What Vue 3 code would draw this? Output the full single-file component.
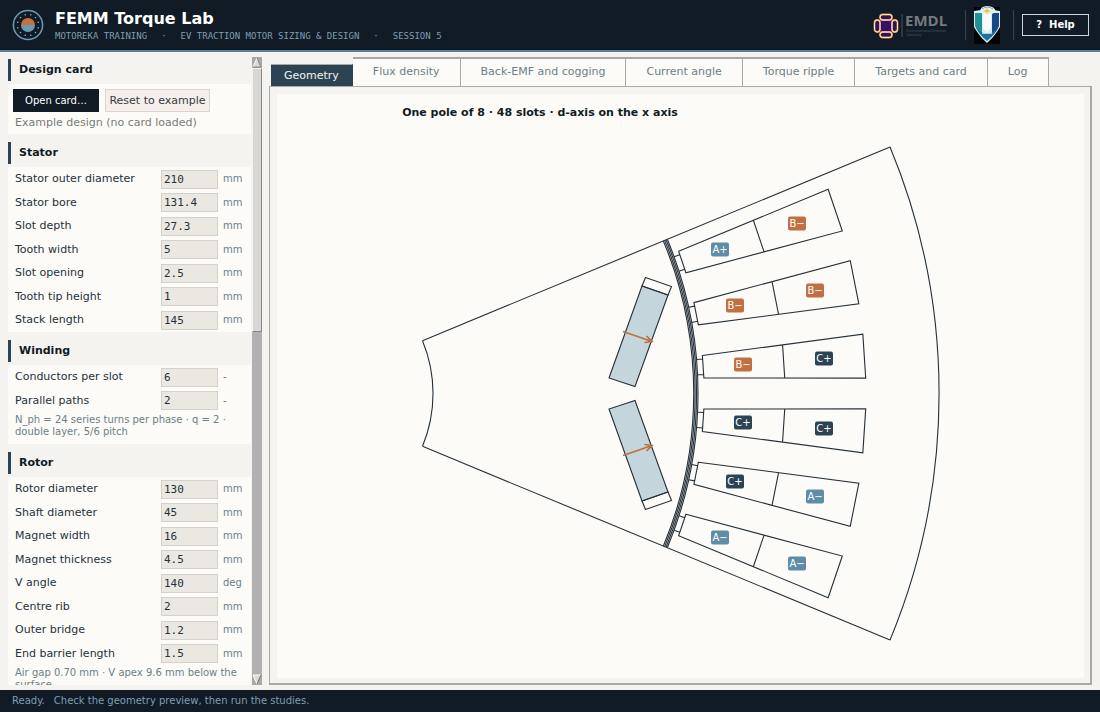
<script setup>
import { ref } from 'vue'

const sections = ref([
  {
    title: 'Stator',
    fields: [
      { label: 'Stator outer diameter', value: '210', unit: 'mm' },
      { label: 'Stator bore', value: '131.4', unit: 'mm' },
      { label: 'Slot depth', value: '27.3', unit: 'mm' },
      { label: 'Tooth width', value: '5', unit: 'mm' },
      { label: 'Slot opening', value: '2.5', unit: 'mm' },
      { label: 'Tooth tip height', value: '1', unit: 'mm' },
      { label: 'Stack length', value: '145', unit: 'mm' }
    ]
  },
  {
    title: 'Winding',
    fields: [
      { label: 'Conductors per slot', value: '6', unit: '-' },
      { label: 'Parallel paths', value: '2', unit: '-' }
    ],
    note: 'N_ph = 24 series turns per phase · q = 2 · double layer, 5/6 pitch'
  },
  {
    title: 'Rotor',
    fields: [
      { label: 'Rotor diameter', value: '130', unit: 'mm' },
      { label: 'Shaft diameter', value: '45', unit: 'mm' },
      { label: 'Magnet width', value: '16', unit: 'mm' },
      { label: 'Magnet thickness', value: '4.5', unit: 'mm' },
      { label: 'V angle', value: '140', unit: 'deg' },
      { label: 'Centre rib', value: '2', unit: 'mm' },
      { label: 'Outer bridge', value: '1.2', unit: 'mm' },
      { label: 'End barrier length', value: '1.5', unit: 'mm' }
    ],
    note: 'Air gap 0.70 mm · V apex 9.6 mm below the surface'
  }
])

const tabs = ['Geometry', 'Flux density', 'Back-EMF and cogging', 'Current angle', 'Torque ripple', 'Targets and card', 'Log']
const active = ref('Geometry')

// Motor cross-section, origin on the shaft axis, y pointing down.
const scale = 6.134
const halfPole = Math.PI / 8
const point = (r, a) => `${(r * Math.cos(a)).toFixed(2)} ${(-r * Math.sin(a)).toFixed(2)}`
const arc = (mm) => {
  const r = mm * scale
  return `M${point(r, halfPole)}A${r} ${r} 0 0 1 ${point(r, -halfPole)}`
}
const side = (s) => `M${point(22.5 * scale, s * halfPole)}L${point(105 * scale, s * halfPole)}`
const outline = [arc(22.5), arc(105), side(1), side(-1)].join('')
const gap = [65, 65.23, 65.47, 65.7].map(arc).join('')

const slots = [
  [18.75, 'A+', 'B−'],
  [11.25, 'B−', 'B−'],
  [3.75, 'B−', 'C+'],
  [-3.75, 'C+', 'C+'],
  [-11.25, 'C+', 'A−'],
  [-18.75, 'A−', 'A−']
].map(([deg, inner, outer]) => ({ deg, inner, outer }))

const coils = slots.flatMap(({ deg, inner, outer }) => {
  const a = (deg * Math.PI) / 180
  return [[449, inner], [530, outer]].map(([r, text]) => ({
    text,
    phase: 'phase-' + text[0].toLowerCase(),
    x: Math.round(r * Math.cos(a)),
    y: Math.round(-r * Math.sin(a))
  }))
})

const rim = Array.from({ length: 12 }, (_, i) => i * 30 + 15)
</script>

<template>
  <div class="app">
    <header class="top">
      <svg class="mark" viewBox="0 0 32 32" aria-hidden="true">
        <circle cx="16" cy="16" r="14.6" fill="none" stroke="#6d9ab3" stroke-width="1.5" />
        <circle v-for="a in rim" :key="a" cx="16" cy="5.4" r="0.8" fill="#7fa8bd" :transform="`rotate(${a} 16 16)`" />
        <path d="M9 16a7 7 0 0 1 14 0z" fill="#c8703a" />
        <path d="M9 16a7 7 0 0 0 14 0z" fill="#6d9ab3" />
      </svg>
      <div class="names">
        <h1>FEMM Torque Lab</h1>
        <p class="crumbs">
          <span>MOTOREKA TRAINING</span><span>·</span><span>EV TRACTION MOTOR SIZING &amp; DESIGN</span><span>·</span><span>SESSION 5</span>
        </p>
      </div>
      <svg class="emdl" viewBox="0 0 76 28" role="img" aria-label="EMDL">
        <circle cx="14" cy="15" r="8" fill="#21146e" />
        <path d="M8 9 20 21M20 9 8 21" stroke="#3a1165" stroke-width="3" />
        <g fill="#2b1459" stroke="#e08a5c" stroke-width="1.8">
          <rect x="8" y="3.5" width="12" height="5.5" rx="2.7" />
          <rect x="8" y="21" width="12" height="5.5" rx="2.7" />
          <rect x="2.5" y="9" width="5.5" height="12" rx="2.7" />
          <rect x="20" y="9" width="5.5" height="12" rx="2.7" />
        </g>
        <g fill="none" stroke="#fff0bd" stroke-width="0.9">
          <rect x="8" y="3.5" width="12" height="5.5" rx="2.7" />
          <rect x="8" y="21" width="12" height="5.5" rx="2.7" />
          <rect x="2.5" y="9" width="5.5" height="12" rx="2.7" />
          <rect x="20" y="9" width="5.5" height="12" rx="2.7" />
        </g>
        <path d="M30 3v23" stroke="#4c5358" stroke-width="1" />
        <text x="33" y="15" class="emdl-name">EMDL</text>
        <text x="34" y="21" class="emdl-sub">Electromechanical Drivetrain</text>
        <text x="34" y="25" class="emdl-sub">Laboratory</text>
      </svg>
      <span class="rule"></span>
      <svg class="shield" viewBox="0 0 26 38" aria-hidden="true">
        <path d="M0 1h26v37H0z" fill="#020406" />
        <path d="M0 5Q7 5 13 2 19 5 26 5V21Q21 30 13 37 5 30 0 21z" fill="#dfecef" />
        <path d="M1 7h7v19L13 34Q4 28 1 20z" fill="#1e9297" />
        <path d="M18 7h7v13q-3 8-12 14l5-8z" fill="#174785" />
        <path d="M3 23q4 4 10 4t10-4q-3 6-10 12Q6 29 3 23z" fill="#1a72a0" />
        <path d="M9 8h8v14l-4 4-4-4z" fill="#f7fbfb" />
        <path d="M6 6q0-6 7-6 8 0 9 6l-4 2-5-1-4 1z" fill="#e8eff0" />
        <path d="M8 3q5-4 11 0" fill="none" stroke="#6ea9b4" />
        <path d="M13 2l1 2 3 1-3 1-1 2-1-2-3-1 3-1z" fill="#efc33a" />
        <path d="M8 27h10" stroke="#eaf7f7" stroke-width="1.4" />
      </svg>
      <span class="rule"></span>
      <button class="help" type="button"><span>?</span><span>Help</span></button>
    </header>

    <main class="work">
      <aside class="side">
        <div class="scroll">
          <section>
            <h2>Design card</h2>
            <div class="card">
              <div class="actions">
                <button class="primary" type="button">Open card…</button>
                <button class="reset" type="button">Reset to example</button>
              </div>
              <p class="state">Example design (no card loaded)</p>
            </div>
          </section>
          <section v-for="s in sections" :key="s.title">
            <h2>{{ s.title }}</h2>
            <div class="card">
              <div v-for="f in s.fields" :key="f.label" class="field">
                <label :for="f.label">{{ f.label }}</label>
                <input :id="f.label" v-model="f.value" type="text" />
                <span class="unit">{{ f.unit }}</span>
              </div>
              <p v-if="s.note" class="note">{{ s.note }}</p>
            </div>
          </section>
        </div>
        <div class="bar" aria-hidden="true">
          <svg viewBox="0 0 10 11"><path d="M0 0h10v11H0z" fill="#aaa9a7" /><path d="M5 1 9 10H1z" fill="#dcdad7" /><path d="M5 1 1 10" stroke="#fff" /><path d="M1 10h8L5 1" fill="none" stroke="#858380" /></svg>
          <div class="thumb"></div>
          <div class="trough"></div>
          <svg viewBox="0 0 10 11"><path d="M0 0h10v11H0z" fill="#aaa9a7" /><path d="M1 1h8L5 10z" fill="#dcdad7" /><path d="M5 10 1 1h8" fill="none" stroke="#fff" /><path d="M9 1 5 10" stroke="#777572" /></svg>
        </div>
      </aside>

      <div class="book">
        <nav class="tabs" role="tablist">
          <button
            v-for="t in tabs" :key="t" type="button" role="tab"
            :aria-selected="t === active" :class="['tab', { on: t === active }]" @click="active = t"
          >{{ t }}</button>
        </nav>
        <div class="page">
          <svg class="plot" viewBox="-18 -299.5 807 584" role="img" aria-label="Motor pole cross-section">
            <text class="plot-title" x="245" y="-278">One pole of 8 · 48 slots · d-axis on the x axis</text>
            <g class="lines">
              <path :d="outline" />
              <path :d="gap" />
              <g v-for="s in slots" :key="s.deg" :transform="`rotate(${-s.deg})`">
                <path d="M403-7.7H409M403 7.7H409M409-11.3 570.5-22V22L409 11.3zM489.7-16.7V16.7" />
              </g>
              <g v-for="m in [1, -1]" :key="m" :transform="`scale(1 ${m})`">
                <path class="magnet" d="M347-107.5 373-98.5 340-7 314-15.5z" />
                <path d="M350.5-116 376.5-107 373-98.5 347-107.5z" />
              </g>
              <path class="arrow" d="M328-62 357-52M351.5-57.5 357-52 349.5-51" />
              <path class="arrow" d="M328 62 357 52M351.5 57.5 357 52 349.5 51" />
            </g>
            <g v-for="(c, i) in coils" :key="i" :class="c.phase">
              <rect :x="c.x - 9" :y="c.y - 7" width="18" height="14" rx="2" />
              <text class="coil" :x="c.x" :y="c.y + 3">{{ c.text }}</text>
            </g>
          </svg>
        </div>
      </div>
    </main>

    <footer class="status"><span>Ready.</span><span>Check the geometry preview, then run the studies.</span></footer>
  </div>
</template>

<style>
body {
  background: #f4f3f0;
}
</style>

<style scoped>
.app {
  height: 100vh;
  display: flex;
  flex-direction: column;
  font: 11px/14px "DejaVu Sans", sans-serif;
  color: #25323c;
  background: #f4f3f0;
}
.app * {
  box-sizing: border-box;
}
h1, h2, p {
  margin: 0;
}
button, input {
  font: inherit;
  margin: 0;
  border-radius: 0;
}
.top {
  flex: none;
  height: 52px;
  display: flex;
  align-items: center;
  padding: 0 11px 0 12px;
  background: #111b25;
  border-bottom: 2px solid #597f99;
}
.mark {
  width: 32px;
  height: 32px;
}
.names {
  flex: 1;
  margin-left: 11px;
  padding-top: 2px;
}
h1 {
  font-size: 16px;
  line-height: 20px;
  color: #fff;
}
.crumbs {
  display: flex;
  gap: 14px;
  font: 9px/14px "DejaVu Sans Mono", monospace;
  color: #7f9fb2;
}
.emdl {
  width: 76px;
  height: 28px;
  margin-right: 17px;
  overflow: visible;
}
.emdl-name {
  font: bold 15px "Open Sans", sans-serif;
  fill: #75797d;
}
.emdl-sub {
  font: 3px "Open Sans", sans-serif;
  fill: #575d62;
}
.rule {
  width: 1px;
  height: 30px;
  background: #33444f;
}
.shield {
  width: 26px;
  height: 38px;
  margin: 0 13px 0 8px;
}
.help {
  display: flex;
  justify-content: center;
  align-items: center;
  gap: 7px;
  width: 67px;
  height: 22px;
  margin-left: 8px;
  padding: 0;
  font-size: 10px;
  font-weight: bold;
  color: #fff;
  background: #111b25;
  border: 1px solid #cbd5da;
}
.work {
  flex: 1;
  min-height: 0;
  display: flex;
  gap: 7px;
  padding: 5px 8px 5px;
}
.side {
  width: 254px;
  display: flex;
  min-height: 0;
}
.scroll {
  flex: 1;
  overflow: hidden;
  padding-right: 1px;
}
h2 {
  height: 22px;
  margin: 2px 0 3px;
  padding-left: 8px;
  border-left: 3px solid #2c4354;
  font-size: 11px;
  line-height: 21px;
  color: #111b25;
}
section + section h2 {
  margin-top: 8px;
}
.card {
  background: #fcfbf7;
}
.actions {
  display: flex;
  gap: 6px;
  padding: 5px 5px 0;
}
.actions button {
  height: 23px;
  padding: 0;
  line-height: 20px;
}
.actions .primary {
  width: 86px;
  font-size: 10px;
  color: #fff;
  background: #111b25;
  border: 1px solid #111b25;
}
.actions .reset {
  width: 105px;
  color: #333d43;
  background: #f5eeeb;
  border: 1px solid #ddd5d2;
}
.state {
  padding: 4px 7px;
  color: #777b7a;
}
.field {
  display: grid;
  grid-template-columns: 146px 57px 1fr;
  align-items: center;
  height: 23px;
  padding-left: 7px;
}
.field:nth-child(odd) {
  height: 24px;
}
.field input {
  width: 57px;
  height: 19px;
  padding: 0 2px;
  font: 11px/17px "DejaVu Sans Mono", monospace;
  color: #25323c;
  background: #ebe8e2;
  border: 1px solid #d4d1ca;
}
.unit {
  padding-left: 5px;
  font-size: 10px;
  color: #6b7f89;
}
.note {
  padding: 2px 7px 6px;
  font-size: 10px;
  line-height: 12px;
  color: #6b7f89;
}
.bar {
  width: 10px;
  display: flex;
  flex-direction: column;
}
.bar svg {
  width: 10px;
  height: 11px;
}
.thumb {
  flex: 263;
  background: #d8d7d6;
  border: 1px solid #f3f3f3;
  border-right-color: #858585;
  border-bottom-color: #858585;
}
.trough {
  flex: 343;
  background: #b1b1b1;
}
.book {
  flex: 1;
  min-width: 0;
  display: flex;
  flex-direction: column;
}
.tabs {
  display: flex;
  align-items: flex-end;
  height: 29px;
  padding-left: 2px;
}
.tab {
  height: 29px;
  padding: 0 20px 1px;
  color: #6b7f89;
  background: #fcfbf7;
  border: solid #a9a8a4;
  border-width: 2px 1px 0 0;
}
.tab.on {
  height: 22px;
  padding: 0 13px;
  color: #f4f3f0;
  background: #2c4354;
  border-right-color: #2c4354;
  border-top-width: 1px;
}
.page {
  flex: 1;
  min-height: 0;
  display: flex;
  padding: 7px 6px 5px 7px;
  border: 1px solid #aaa9a4;
  border-right: 2px solid #aaa9a4;
  border-bottom: 2px solid #aaa9a4;
}
.plot {
  flex: 1;
  min-width: 0;
  background: #fcfbf7;
}
.plot-title {
  font: bold 11px "DejaVu Sans", sans-serif;
  text-anchor: middle;
  fill: #111b25;
}
.lines path {
  fill: none;
  stroke: #25303a;
  stroke-width: 1.1;
}
.lines .magnet {
  fill: #c5d5dc;
}
.lines .arrow {
  stroke: #c07042;
  stroke-width: 1.7;
}
.coil {
  font: 10px "DejaVu Sans", sans-serif;
  text-anchor: middle;
  fill: #fff;
}
.phase-a rect {
  fill: #5f8da7;
}
.phase-b rect {
  fill: #c07042;
}
.phase-c rect {
  fill: #2c4354;
}
.status {
  flex: none;
  display: flex;
  gap: 9px;
  height: 22px;
  padding: 0 12px;
  font-size: 10px;
  line-height: 22px;
  color: #7f9fb2;
  background: #111b25;
}
</style>
